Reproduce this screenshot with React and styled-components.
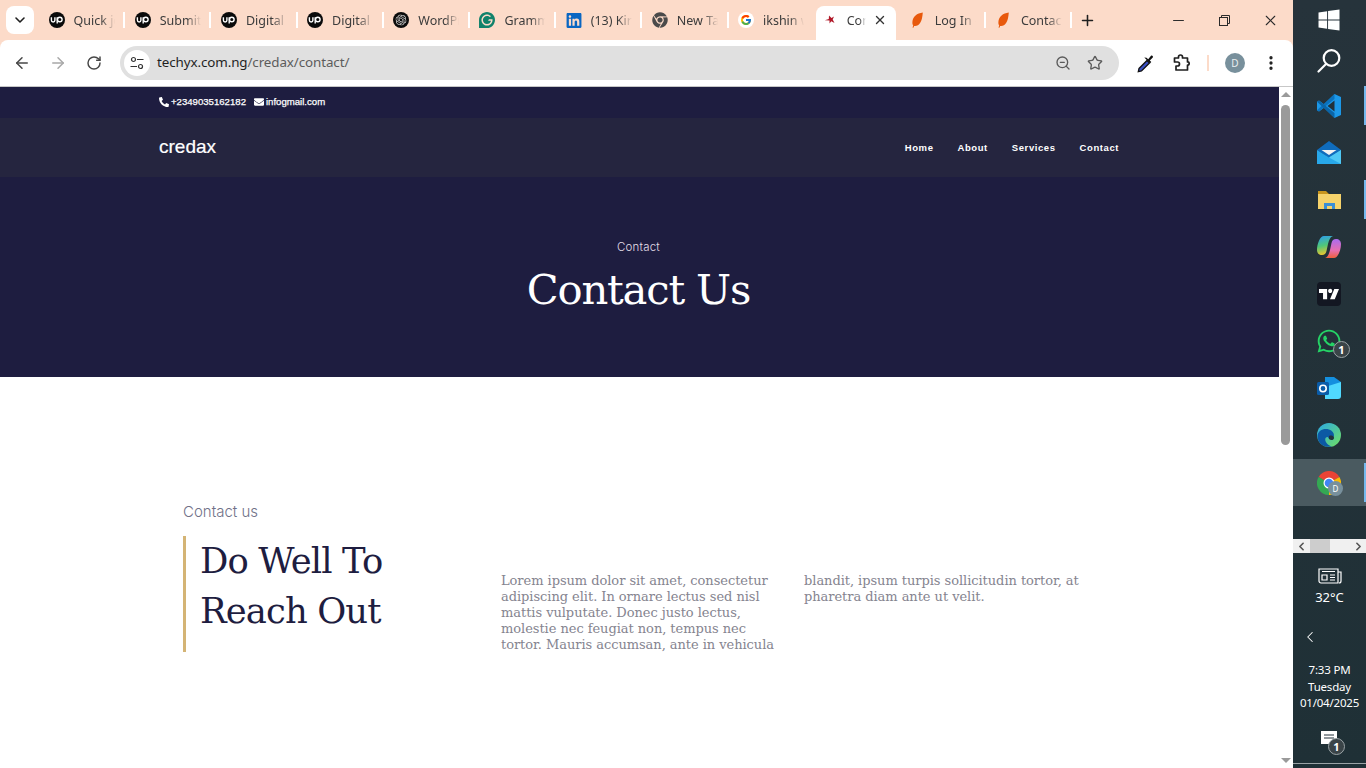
import React from 'react';
import styled, { createGlobalStyle } from 'styled-components';
import {
  ArrowLeft, ArrowRight, RotateCw, Star, ZoomOut, EllipsisVertical, Plus, X, Minus, ChevronDown,
  ChevronLeft, ChevronRight,
} from 'lucide-react';
import { FaWindows, FaLinkedin, FaChrome, FaWhatsapp, FaPhoneAlt, FaEnvelope } from 'react-icons/fa';
import { FcGoogle } from 'react-icons/fc';
import { SiOpenai, SiGrammarly, SiTradingview } from 'react-icons/si';

const GlobalStyle = createGlobalStyle`
  html, body { margin: 0; padding: 0; height: 768px; overflow: hidden; background: #fff; }
  * { box-sizing: border-box; }
  body { font-family: "Liberation Sans", Arial, sans-serif; }
`;

const Screen = styled.div`
  display: flex;
  width: 1366px;
  height: 768px;
  overflow: hidden;
`;

const Browser = styled.div`
  width: 1293px;
  display: flex;
  flex-direction: column;
  background: #fcdbc9;
`;

const TabStrip = styled.div`
  height: 40px;
  display: flex;
  align-items: center;
  padding-left: 6px;
`;

const TabSearch = styled.div`
  width: 28px;
  height: 28px;
  margin-right: 5px;
  background: #fff;
  border-radius: 8px;
  display: flex;
  align-items: center;
  justify-content: center;
  color: #1f1f1f;
`;

const Tab = styled.div`
  width: 84.2px;
  height: 28px;
  display: flex;
  align-items: center;
  padding-left: ${p => p.$pad || 9.5}px;
  flex-shrink: 0;
`;

const ActiveTab = styled.div`
  width: 80px;
  height: 34px;
  margin: 6px 4px 0 3px;
  padding: 0 9px 6px 6px;
  background: #fff;
  border-radius: 8px 8px 0 0;
  display: flex;
  align-items: center;
  flex-shrink: 0;
`;

const Favicon = styled.span`
  width: 16px;
  height: 16px;
  flex-shrink: 0;
  display: flex;
  align-items: center;
  justify-content: center;
`;

const TabLabel = styled.span`
  margin-left: ${p => p.$gap || 9}px;
  width: ${p => p.$w || 41}px;
  overflow: hidden;
  white-space: nowrap;
  font: 12.5px "Noto Sans", "Open Sans", sans-serif;
  color: #3c3c3c;
  -webkit-mask-image: linear-gradient(to right, #000 65%, transparent 100%);
  mask-image: linear-gradient(to right, #000 65%, transparent 100%);
`;

const TabClose = styled.span`
  margin-left: 7px;
  display: flex;
  color: #333;
`;

const TabSep = styled.span`
  width: 2px;
  height: 16px;
  background: #fff;
  flex-shrink: 0;
`;

const NewTab = styled.div`
  margin-left: 7px;
  display: flex;
  color: #1f1f1f;
`;

const WindowControls = styled.div`
  margin-left: auto;
  display: flex;
  color: #2a2a2a;
`;

const WinBtn = styled.div`
  width: 46px;
  height: 40px;
  display: flex;
  align-items: center;
  justify-content: center;
`;

const Toolbar = styled.div`
  height: 46px;
  background: #fff;
  border-radius: 8px 8px 0 0;
  display: flex;
  align-items: center;
  padding-left: 4px;
  color: #474747;
`;

const ToolBtn = styled.div`
  width: 36px;
  height: 36px;
  display: flex;
  align-items: center;
  justify-content: center;
  flex-shrink: 0;
  color: ${p => p.$color || '#474747'};
`;

const AddressBar = styled.div`
  width: 999px;
  height: 34px;
  margin: 0 9px 0 8px;
  border-radius: 17px;
  background: #e0e0e0;
  display: flex;
  align-items: center;
  padding: 0 8px 0 4px;
`;

const SiteInfo = styled.div`
  width: 26px;
  height: 26px;
  border-radius: 50%;
  background: #fff;
  display: flex;
  align-items: center;
  justify-content: center;
`;

const Url = styled.div`
  margin: -2px 0 0 7px;
  flex: 1;
  font: 13.4px "Noto Sans", "Open Sans", sans-serif;
  letter-spacing: -0.1px;
  color: #5c5c5c;
  b { font-weight: 400; color: #1f1f1f; }
`;

const AddressIcon = styled.div`
  width: 32px;
  display: flex;
  justify-content: center;
  color: #5a5a5a;
`;

const ToolDivider = styled.span`
  width: 2px;
  height: 16px;
  margin: 0 8px 0 7px;
  background: #fcdbc9;
`;

const Avatar = styled.div`
  width: 20px;
  height: 20px;
  border-radius: 50%;
  background: #78909c;
  color: #e8eef0;
  font: 10px "Noto Sans", sans-serif;
  display: flex;
  align-items: center;
  justify-content: center;
`;

const Viewport = styled.div`
  flex: 1;
  display: flex;
  border-top: 1px solid #c7c7c7;
  min-height: 0;
  background: #fff;
`;

const Page = styled.div`
  width: 1279px;
  overflow: hidden;
`;

const TopBar = styled.div`
  height: 31px;
  padding: 0 0 2px 159px;
  background: #1e1d40;
  display: flex;
  align-items: center;
  gap: 8px;
  color: #fff;
  font-size: 9.6px;
  -webkit-text-stroke: 0.25px #fff;
`;

const Contact = styled.span`
  display: flex;
  align-items: center;
  gap: 2px;
`;

const Nav = styled.div`
  height: 59px;
  padding: 0 160px 2px 159px;
  background: #25253f;
  display: flex;
  align-items: center;
  justify-content: space-between;
`;

const Logo = styled.div`
  font-size: 19px;
  color: #fff;
  -webkit-text-stroke: 0.2px #fff;
`;

const Menu = styled.div`
  display: flex;
  gap: 24px;
  margin-top: 2px;
  font-size: 9.5px;
  font-weight: 700;
  letter-spacing: 0.58px;
  color: #fff;
`;

const Hero = styled.div`
  height: 200px;
  padding: 63px 2px 0 0;
  background: #1e1d40;
  display: flex;
  flex-direction: column;
  align-items: center;
  color: #fff;
`;

const HeroCrumb = styled.div`
  font: 300 11.5px/14px Inter, sans-serif;
  letter-spacing: 0.2px;
  color: #e3dfe8;
`;

const HeroTitle = styled.h1`
  margin: 10px 0 0;
  font: 400 41.7px/52px "DejaVu Serif", serif;
  letter-spacing: -1.2px;
`;

const Section = styled.div`
  display: grid;
  grid-template-columns: 318px 576px;
  padding: 126px 0 0 183px;
`;

const Eyebrow = styled.div`
  font: 300 15px/18px Inter, sans-serif;
  color: #6f7188;
  margin-bottom: 15px;
`;

const Heading = styled.h2`
  margin: 0;
  height: 116px;
  padding-left: 14px;
  border-left: 3px solid #d4b475;
  font: 400 35.4px/50px "DejaVu Serif", serif;
  letter-spacing: -0.9px;
  color: #1e1d40;
`;

const Lorem = styled.p`
  align-self: end;
  margin: 0 0 -1px;
  height: 80px;
  columns: 2;
  column-gap: 30px;
  column-fill: auto;
  white-space: nowrap;
  font: 400 13px/16px "DejaVu Serif", serif;
  letter-spacing: -0.05px;
  color: #85848f;
`;

const Scrollbar = styled.div`
  width: 14px;
  position: relative;
  background: #fff;
`;

const Thumb = styled.div`
  position: absolute;
  left: 2px;
  top: 18px;
  width: 9px;
  height: 340px;
  border-radius: 5px;
  background: #9a9a9a;
`;

const Arrow = styled.div`
  position: absolute;
  left: 2px;
  width: 0;
  height: 0;
  border-left: 5px solid transparent;
  border-right: 5px solid transparent;
  ${p => p.$up
    ? 'top: 5px; border-bottom: 5px solid #9a9a9a;'
    : 'bottom: 5px; border-top: 5px solid #9a9a9a;'}
`;

const Taskbar = styled.div`
  width: 73px;
  height: 768px;
  background: linear-gradient(#26333b, #1f3036);
  display: flex;
  flex-direction: column;
  color: #fff;
  font: 12px "Noto Sans", "Open Sans", sans-serif;
`;

const Slot = styled.div`
  height: ${p => p.$h || 47}px;
  flex-shrink: 0;
  padding-right: 1px;
  position: relative;
  display: flex;
  align-items: center;
  justify-content: center;
  margin-top: ${p => p.$active ? 1 : 0}px;
  background: ${p => p.$active ? '#4a5a60' : 'transparent'};
`;

const Indicator = styled.span`
  position: absolute;
  right: 0;
  top: 4px;
  bottom: 4px;
  width: 2px;
  background: #76b9ed;
`;

const Badge = styled.span`
  position: absolute;
  width: 17px;
  height: 17px;
  left: ${p => p.$l || 40}px;
  top: ${p => p.$t || 24}px;
  border-radius: 50%;
  background: #3a4448;
  border: 1px solid #9aa3a6;
  color: #fff;
  font-size: 11px;
  font-weight: 700;
  display: flex;
  align-items: center;
  justify-content: center;
`;

const AvatarBadge = styled(Badge)`
  left: 35px;
  top: 22px;
  width: 15px;
  height: 15px;
  background: #78909c;
  border: none;
  font-size: 8px;
  font-weight: 400;
`;

const TrayScroll = styled.div`
  height: 14px;
  margin-top: 33px;
  padding: 0 1px 0 2px;
  background: #f0f0f0;
  color: #555;
  display: flex;
  align-items: center;
`;

const TrayThumb = styled.span`
  width: 20px;
  height: 14px;
  margin: 0 auto 0 2px;
  background: #cdcdcd;
`;

const Weather = styled.div`
  height: 60px;
  padding-top: 15px;
  display: flex;
  flex-direction: column;
  align-items: center;
  font-size: 13px;
  line-height: 18px;
  gap: 4px;
`;

const TrayChevron = styled.div`
  height: 48px;
  padding: 15px 0 0 8px;
  display: flex;
  color: #fff;
`;

const Clock = styled.div`
  height: 55px;
  padding-top: 1px;
  text-align: center;
  font-size: 11.5px;
  line-height: 16.5px;
  letter-spacing: -0.2px;
`;

const Notify = styled.div`
  position: relative;
  flex: 1;
  display: flex;
  justify-content: center;
  padding: 15px 1px 0 0;
  border-bottom: 1px solid #9aa3a6;
  margin-bottom: 4px;
`;

const Upwork = () => (
  <svg width="16" height="16" viewBox="0 0 16 16">
    <circle cx="8" cy="8" r="8" fill="#0b0b0b" />
    <path d="M2.4 5.2v3.1a1.75 1.75 0 0 0 3.500 0V5.200M8.200 11.500V5.200" fill="none" stroke="#fff" strokeWidth="1.400" />
    <circle cx="10.800" cy="7.500" r="2.300" fill="none" stroke="#fff" strokeWidth="1.400" />
  </svg>
);

const OpenAiMark = () => (
  <svg width="16" height="16" viewBox="0 0 16 16">
    <circle cx="8" cy="8" r="8" fill="#0b0b0b" />
    <SiOpenai x="2.5" y="2.5" size={11} color="#ddd" />
  </svg>
);

const GoogleMark = () => (
  <svg width="16" height="16" viewBox="0 0 16 16">
    <circle cx="8" cy="8" r="8" fill="#fff" />
    <FcGoogle x="2" y="2" size={12} />
  </svg>
);

const Leaf = () => (
  <svg width="16" height="16" viewBox="0 0 16 16">
    <path d="M12.800 .6C7 1.300 2.800 4.600 2.400 10c-.1 1.500.2 2.700.8 3.500L2.500 15.400l.9.300.7-1.700c4.700.6 8-3 8.700-13.400z" fill="#e8590c" />
  </svg>
);

const CredaxMark = () => (
  <svg width="12" height="12" viewBox="0 0 12 12">
    <path d="M5 1.500l2.500 2.500L10 2.500 8.700 5.500 10.500 9 7.300 7.200 5.500 9.500 5.500 6.500.8 6.300 4.800 5z" fill="#b01828" />
  </svg>
);

const TuneIcon = () => (
  <svg width="14" height="14" viewBox="0 0 14 14" fill="none" stroke="#333" strokeWidth="1.200">
    <circle cx="3.500" cy="3.500" r="2" />
    <path d="M7 3.500h6.500M0.500 10.500H7" />
    <circle cx="10.500" cy="10.500" r="2" />
  </svg>
);

const Dropper = () => (
  <svg width="20" height="20" viewBox="0 0 20 20">
    <path d="M3 15.500L11 7.500l2.500 2.500-8 8-3.200.7z" fill="#3b50c4" stroke="#111" strokeWidth="1.300" />
    <path d="M10.500 4.800l1.700 1.400 2.800-3.400c1-.9 2.600.5 1.800 1.800l-3 2.900 1.500 1.600-1.300 1.200-5.700-5.700z" fill="#111" />
  </svg>
);

const PuzzleIcon = () => (
  <svg width="20" height="20" viewBox="0 0 20 20" fill="none" stroke="#1f1f1f" strokeWidth="1.700" strokeLinejoin="round">
    <path d="M2.500 5h4V4a2 2 0 0 1 4 0v1h5v4h1a2 2 0 0 1 0 3h-1v5H4v-4h1.500a2 2 0 0 0 0-4h-3z" />
  </svg>
);

const RestoreIcon = () => (
  <svg width="11" height="11" viewBox="0 0 11 11" fill="none" stroke="#2a2a2a">
    <rect x=".5" y="2.500" width="8" height="8" />
    <path d="M2.500 2.500V.5h8v8H8.500" />
  </svg>
);

const VsCode = () => (
  <svg width="26" height="26" viewBox="0 0 26 26">
    <path d="M18.500 1L25 4v18l-6.500 3L8 14.800 3 18.500 1 17.300v-8.600L3 7.500 8 11.200z" fill="#1c98e8" />
    <path d="M18.500 7.500L11.500 13l7 5.500z" fill="#22313a" />
    <path d="M18.500 1L1 17.300 3 18.500 18.500 6z" fill="#0b72bd" />
    <path d="M1 8.700L3 7.500 18.500 20v5z" fill="#0a65a8" />
  </svg>
);

const Mail = () => (
  <svg width="26" height="26" viewBox="0 0 26 26">
    <path d="M1 10L13 1l12 9-12 8z" fill="#0f6cbd" />
    <path d="M5.500 10h15L13 15z" fill="#f2f2f2" />
    <path d="M1 10l12 7.500L25 10v14H1z" fill="#28a8ea" />
    <path d="M13 17.500L25 10v14z" fill="#4fc8f5" />
  </svg>
);

const Folder = () => (
  <svg width="26" height="26" viewBox="0 0 26 26">
    <path d="M2 4h8l3 3h12v15H2z" fill="#c9961e" />
    <path d="M2 7h23v15H2z" fill="#f6d36b" />
    <path d="M8 22v-6h11v6h-3v-3h-5v3z" fill="#3b8fd6" />
  </svg>
);

const Copilot = () => (
  <svg width="26" height="26" viewBox="0 0 26 26">
    <defs>
      <linearGradient id="cpa" x1="0.300" y1="0" x2="0.500" y2="1">
        <stop offset="0" stopColor="#2f9fe6" />
        <stop offset=".5" stopColor="#50c878" />
        <stop offset="1" stopColor="#f7c52a" />
      </linearGradient>
      <linearGradient id="cpb" x1="0.500" y1="0" x2="0.500" y2="1">
        <stop offset="0" stopColor="#a96cf0" />
        <stop offset=".6" stopColor="#e86fb0" />
        <stop offset="1" stopColor="#f0603c" />
      </linearGradient>
    </defs>
    <path d="M8 2h9c-3 1-4 4-5 8l-1.500 7c-.6 2.500-2 4-4.500 4-3 0-5-2-5-5 0-6 3-14 7-14z" fill="url(#cpa)" />
    <path d="M18 24H9c3-1 4-4 5-8l1.500-7C16.100 6.500 17.500 5 20 5c3 0 5 2 5 5 0 6-3 14-7 14z" fill="url(#cpb)" />
  </svg>
);

const TradingView = () => (
  <svg width="24" height="24" viewBox="0 0 24 24">
    <rect width="24" height="24" rx="4" fill="#131722" />
    <SiTradingview x="2" y="2" size={20} color="#fff" />
  </svg>
);

const Outlook = () => (
  <svg width="24" height="24" viewBox="0 0 24 24">
    <path d="M8 1h9l7 5v12l-7 5H8z" fill="#1490df" />
    <path d="M8 11l16-5v14a3 3 0 0 1-3 3H8z" fill="#50d9ff" />
    <rect y="6" width="12" height="13" rx="1.500" fill="#0a5ca8" />
    <circle cx="6" cy="12.500" r="3.200" fill="none" stroke="#fff" strokeWidth="1.600" />
  </svg>
);

const Edge = () => (
  <svg width="24" height="24" viewBox="0 0 24 24">
    <defs>
      <linearGradient id="edg" x1="0" y1="0" x2="1" y2="1">
        <stop offset="0" stopColor="#2aa8e8" />
        <stop offset="1" stopColor="#70e060" />
      </linearGradient>
    </defs>
    <circle cx="12" cy="12" r="12" fill="url(#edg)" />
    <path d="M.5 13C1 7 7 5 12 6.500c5 1.500 6 6 4 8.500-2 2-5 1-5-1-5-.5-3 8 4 9.300C8 25.500.5 21 .5 13z" fill="#0c59a4" />
    <path d="M12 13c3-1 5 0 5 2s-3 3-5 1z" fill="#22313a" />
  </svg>
);

const ChromeMark = () => (
  <svg width="24" height="24" viewBox="0 0 24 24">
    <path d="M12 12L1.600 6A12 12 0 0 1 22.400 6z" fill="#ea4335" />
    <path d="M12 12L22.400 6A12 12 0 0 1 12 24z" fill="#fbbc04" />
    <path d="M12 12L12 24A12 12 0 0 1 1.600 6z" fill="#34a853" />
    <circle cx="12" cy="12" r="5.500" fill="#fff" />
    <circle cx="12" cy="12" r="4.300" fill="#4285f4" />
  </svg>
);

const NewsIcon = () => (
  <svg width="24" height="16" viewBox="0 0 24 16" fill="none" stroke="#fff" strokeWidth="1.200">
    <path d="M1 1h19v14H3a2 2 0 0 1-2-2zM20 4h3v9a2 2 0 0 1-2 2" />
    <path d="M4 3.500h13M4 7h5v5H4zM12 7h5M12 9.500h5M12 12h5" />
  </svg>
);

const NotifyIcon = () => (
  <svg width="16" height="18" viewBox="0 0 16 18">
    <path d="M0 0h16v13h-4l-4 5v-5H0z" fill="#fff" />
    <path d="M3 4h10M3 7h10" stroke="#22313a" strokeWidth="1" />
  </svg>
);

const tabs = [
  { icon: <Upwork />, label: 'Quick jobs' },
  { icon: <Upwork />, label: 'Submit a' },
  { icon: <Upwork />, label: 'Digital M' },
  { icon: <Upwork />, label: 'Digital M' },
  { icon: <OpenAiMark />, label: 'WordPress' },
  { icon: <SiGrammarly size={16} color="#11826b" />, label: 'Grammarly' },
  { icon: <FaLinkedin size={17} color="#0a66c2" />, label: '(13) Kirsten' },
  { icon: <FaChrome size={16} color="#4a4a4a" />, label: 'New Tab' },
  { icon: <GoogleMark />, label: 'ikshin wo' },
];

const slots = [
  { key: 'code', icon: <VsCode />, run: true },
  { key: 'mail', icon: <Mail /> },
  { key: 'files', icon: <Folder />, run: true },
  { key: 'copilot', icon: <Copilot /> },
  { key: 'tv', icon: <TradingView /> },
  { key: 'wa', icon: <FaWhatsapp size={26} color="#25d366" />, badge: '1' },
  { key: 'outlook', icon: <Outlook /> },
  { key: 'edge', icon: <Edge /> },
];

export default function App() {
  return (
    <Screen>
      <GlobalStyle />
      <Browser>
        <TabStrip>
          <TabSearch><ChevronDown size={16} strokeWidth={2.4} /></TabSearch>
          {tabs.map((t, i) => (
            <React.Fragment key={i}>
              <Tab>
                <Favicon>{t.icon}</Favicon>
                <TabLabel>{t.label}</TabLabel>
              </Tab>
              {i < tabs.length - 1 && <TabSep />}
            </React.Fragment>
          ))}
          <ActiveTab>
            <Favicon><CredaxMark /></Favicon>
            <TabLabel $gap={9} $w={20}>Contact</TabLabel>
            <TabClose><X size={14} strokeWidth={2.4} /></TabClose>
          </ActiveTab>
          <Tab $pad={10}>
            <Favicon><Leaf /></Favicon>
            <TabLabel>Log In ‹ Cre</TabLabel>
          </Tab>
          <TabSep />
          <Tab $pad={10}>
            <Favicon><Leaf /></Favicon>
            <TabLabel>Contact Us</TabLabel>
          </Tab>
          <TabSep />
          <NewTab><Plus size={17} strokeWidth={2.2} /></NewTab>
          <WindowControls>
            <WinBtn><Minus size={17} strokeWidth={1.4} /></WinBtn>
            <WinBtn><RestoreIcon /></WinBtn>
            <WinBtn><X size={17} strokeWidth={1.5} /></WinBtn>
          </WindowControls>
        </TabStrip>

        <Toolbar>
          <ToolBtn><ArrowLeft size={18} /></ToolBtn>
          <ToolBtn $color="#a8a8a8"><ArrowRight size={18} /></ToolBtn>
          <ToolBtn><RotateCw size={16} strokeWidth={2.2} /></ToolBtn>
          <AddressBar>
            <SiteInfo><TuneIcon /></SiteInfo>
            <Url><b>techyx.com.ng</b>/credax/contact/</Url>
            <AddressIcon><ZoomOut size={16} /></AddressIcon>
            <AddressIcon><Star size={16} /></AddressIcon>
          </AddressBar>
          <ToolBtn><Dropper /></ToolBtn>
          <ToolBtn><PuzzleIcon /></ToolBtn>
          <ToolDivider />
          <ToolBtn><Avatar>D</Avatar></ToolBtn>
          <ToolBtn $color="#1f1f1f"><EllipsisVertical size={18} strokeWidth={2.4} /></ToolBtn>
        </Toolbar>

        <Viewport>
          <Page>
            <TopBar>
              <Contact><FaPhoneAlt size={10} />+2349035162182</Contact>
              <Contact><FaEnvelope size={10} />infogmail.com</Contact>
            </TopBar>
            <Nav>
              <Logo>credax</Logo>
              <Menu>
                <span>Home</span>
                <span>About</span>
                <span>Services</span>
                <span>Contact</span>
              </Menu>
            </Nav>
            <Hero>
              <HeroCrumb>Contact</HeroCrumb>
              <HeroTitle>Contact Us</HeroTitle>
            </Hero>
            <Section>
              <div>
                <Eyebrow>Contact us</Eyebrow>
                <Heading>Do Well To<br />Reach Out</Heading>
              </div>
              <Lorem>
                Lorem ipsum dolor sit amet, consectetur<br />
                adipiscing elit. In ornare lectus sed nisl<br />
                mattis vulputate. Donec justo lectus,<br />
                molestie nec feugiat non, tempus nec<br />
                tortor. Mauris accumsan, ante in vehicula<br />
                blandit, ipsum turpis sollicitudin tortor, at<br />
                pharetra diam ante ut velit.
              </Lorem>
            </Section>
          </Page>
          <Scrollbar>
            <Arrow $up />
            <Thumb />
            <Arrow />
          </Scrollbar>
        </Viewport>
      </Browser>

      <Taskbar>
        <Slot $h={40}><FaWindows size={24} /></Slot>
        <Slot $h={42}>
          <svg width="26" height="26" viewBox="0 0 26 26" fill="none" stroke="#fff" strokeWidth="2.200">
            <circle cx="15.500" cy="10" r="7.800" />
            <path d="M10 16l-7.500 7.500" strokeLinecap="round" />
          </svg>
        </Slot>
        {slots.map(s => (
          <Slot key={s.key}>
            {s.icon}
            {s.run && <Indicator />}
            {s.badge && <Badge>{s.badge}</Badge>}
          </Slot>
        ))}
        <Slot $active>
          <ChromeMark />
          <Indicator />
          <AvatarBadge>D</AvatarBadge>
        </Slot>
        <TrayScroll>
          <ChevronLeft size={13} strokeWidth={3} />
          <TrayThumb />
          <ChevronRight size={13} strokeWidth={3} />
        </TrayScroll>
        <Weather>
          <NewsIcon />
          <span>32°C</span>
        </Weather>
        <TrayChevron><ChevronLeft size={18} strokeWidth={1.4} /></TrayChevron>
        <Clock>7:33 PM<br />Tuesday<br />01/04/2025</Clock>
        <Notify>
          <NotifyIcon />
          <Badge $l={35} $t={22}>1</Badge>
        </Notify>
      </Taskbar>
    </Screen>
  );
}
